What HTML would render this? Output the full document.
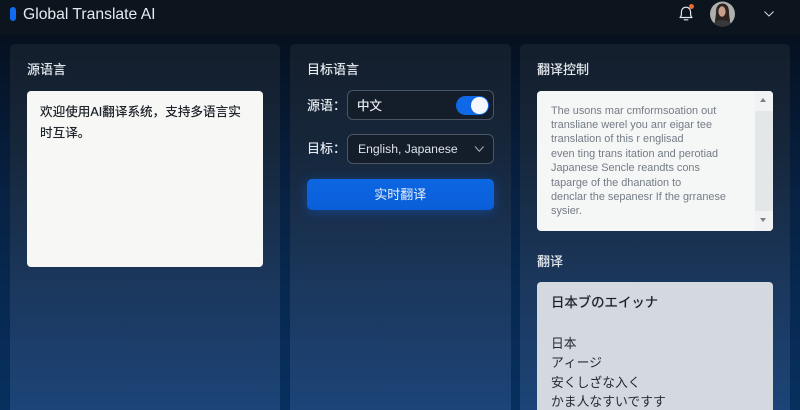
<!DOCTYPE html>
<html lang="zh">
<head>
<meta charset="utf-8">
<title>Global Translate AI</title>
<style>
*{box-sizing:border-box;margin:0;padding:0}
html,body{width:800px;height:410px;overflow:hidden}
body{position:relative;font-family:"Liberation Sans","Noto Sans CJK SC",sans-serif;background:linear-gradient(180deg,#050c16 0,#06152a 80px,#072244 200px,#07305f 410px);color:#e8edf3}
.a{position:absolute}
.top{left:0;top:0;width:800px;height:35px;background:#0c141e}
.panel{top:44px;height:380px;border-radius:5px;background:linear-gradient(180deg,#141e2c 0,#16263a 100px,#1b375c 240px,#1c4478 366px)}
.h{font-size:13px;line-height:18px;color:#e6ebf0;white-space:nowrap;text-shadow:0 0 .5px #e6ebf0}
.box{border-radius:4px}
.lbl{font-size:13px;color:#e6ebf0;line-height:18px;white-space:nowrap;text-shadow:0 0 .5px #e6ebf0}
.field{left:347px;width:146.5px;height:29.5px;border:1px solid #4a5665;border-radius:6px;background:#141d2a}
.t{white-space:nowrap}
</style>
</head>
<body>
<div class="a top"></div>
<div class="a" style="left:10px;top:7px;width:6px;height:14px;border-radius:3px;background:#0f6cf0"></div>
<div class="a t" style="left:23px;top:4.500px;font-size:15.700px;line-height:20px;color:#e6eaef">Global Translate AI</div>

<svg class="a" style="left:678px;top:4px" width="16" height="18" viewBox="0 0 16 18" fill="none" stroke="#e4e8ec" stroke-width="1.200" stroke-linecap="round" stroke-linejoin="round">
<path d="M2 13.500C3.800 12 3.400 10.300 3.400 8.300 3.400 5.400 5.200 3.200 8 3.200s4.600 2.200 4.600 5.100c0 2 -.4 3.700 1.400 5.200z"/>
<path d="M6.200 15.800h3.600"/>
</svg>
<div class="a" style="left:689px;top:4px;width:5px;height:5px;border-radius:50%;background:#ea6a2c"></div>

<svg class="a" style="left:709px;top:1px" width="27" height="27" viewBox="0 0 27 27">
<defs><clipPath id="c"><circle cx="13.500" cy="13" r="12.500"/></clipPath></defs>
<g clip-path="url(#c)">
<rect width="27" height="27" fill="#aeaeac"/>
<path d="M7 11C7 5 10 2.500 13.500 2.500S20 5 20 11c0 4 1 7 1 10H6c0-3 1-6 1-10z" fill="#2b2320"/>
<ellipse cx="13" cy="10.500" rx="3.600" ry="5.200" fill="#c99f8c"/>
<path d="M3 27c0-5 4-8 10-8s11 3 11 8z" fill="#38383a"/>
</g>
</svg>
<svg class="a" style="left:763px;top:10px" width="12" height="8" viewBox="0 0 12 8" fill="none" stroke="#d4d9de" stroke-width="1"><path d="M1.500 1.500 6 6l4.500-4.500"/></svg>

<div class="a panel" style="left:10px;width:270px"></div>
<div class="a panel" style="left:290px;width:221px"></div>
<div class="a panel" style="left:520px;width:270px"></div>

<div class="a h" style="left:27px;top:61px">源语言</div>
<div class="a box" style="left:27px;top:91px;width:236px;height:175.500px;background:#f7f7f5"></div>
<div class="a t" style="left:40px;top:101.500px;font-size:12.600px;line-height:21px;color:#1b2027;text-shadow:0 0 .4px #1b2027">欢迎使用AI翻译系统，支持多语言实<br>时互译。</div>

<div class="a h" style="left:307px;top:61px">目标语言</div>
<div class="a lbl" style="left:307px;top:97px">源语：</div>
<div class="a field" style="top:90px"></div>
<div class="a t" style="left:357px;top:97px;font-size:12.500px;line-height:18px;color:#eef1f4;text-shadow:0 0 .4px #eef1f4">中文</div>
<div class="a" style="left:455.500px;top:95.500px;width:33px;height:19.500px;border-radius:10px;background:#0f68e6"></div>
<div class="a" style="left:471px;top:97px;width:16.500px;height:16.500px;border-radius:50%;background:#f4f7fb"></div>
<div class="a lbl" style="left:307px;top:140px">目标：</div>
<div class="a field" style="top:134px"></div>
<div class="a t" style="left:358px;top:140px;font-size:12.200px;line-height:18px;color:#dfe4ea">English, Japanese</div>
<svg class="a" style="left:474px;top:145px" width="11" height="8" viewBox="0 0 11 8" fill="none" stroke="#aab2bc" stroke-width="1"><path d="M1 1.500 5.300 6.200 9.600 1.500"/></svg>
<div class="a" style="left:307px;top:179px;width:186.500px;height:30.500px;border-radius:5px;background:linear-gradient(180deg,#0d66e2,#0a5fd8);box-shadow:0 2px 12px rgba(20,100,220,.45);text-align:center;font-size:13px;line-height:31px;color:#e8f0fb">实时翻译</div>

<div class="a h" style="left:537px;top:61px">翻译控制</div>
<div class="a box" style="left:537px;top:91px;width:236px;height:140px;background:#f5f6f6;overflow:hidden">
  <div class="a" style="left:218px;top:0;width:18px;height:140px;background:#e4e7e8"></div>
  <div class="a" style="left:218px;top:0;width:18px;height:20px;background:#f1f2f3"></div>
  <div class="a" style="left:218px;top:120px;width:18px;height:20px;background:#f1f2f3"></div>
  <div class="a" style="left:223px;top:7px;width:0;height:0;border-left:3.500px solid transparent;border-right:3.500px solid transparent;border-bottom:4.500px solid #7b8085"></div>
  <div class="a" style="left:223px;top:127px;width:0;height:0;border-left:3.500px solid transparent;border-right:3.500px solid transparent;border-top:4.500px solid #7b8085"></div>
  <div class="a t" style="left:14px;top:12.500px;font-size:10.900px;line-height:14.400px;color:#747c86">The usons mar cmformsoation out<br>transliane werel you anr eigar tee<br>translation of this r englisad<br>even ting trans itation and perotiad<br>Japanese Sencle reandts cons<br>taparge of the dhanation to<br>denclar the sepanesr If the grranese<br>sysier.</div>
</div>

<div class="a h" style="left:537px;top:253px">翻译</div>
<div class="a" style="left:537px;top:282px;width:236px;height:140px;border-radius:4px;background:#d4d9e0"></div>
<div class="a t" style="left:551px;top:294px;font-size:13.400px;line-height:18px;color:#1a1e24;font-family:'Liberation Sans','Noto Sans CJK JP',sans-serif;text-shadow:0 0 .6px #1a1e24">日本ブのエイッナ</div>
<div class="a t" style="left:551px;top:333.500px;font-size:12.800px;line-height:19.500px;color:#262b32;font-family:'Liberation Sans','Noto Sans CJK JP',sans-serif">日本<br>アィージ<br>安くしざな入く<br>かま人なすいですす</div>
</body>
</html>
